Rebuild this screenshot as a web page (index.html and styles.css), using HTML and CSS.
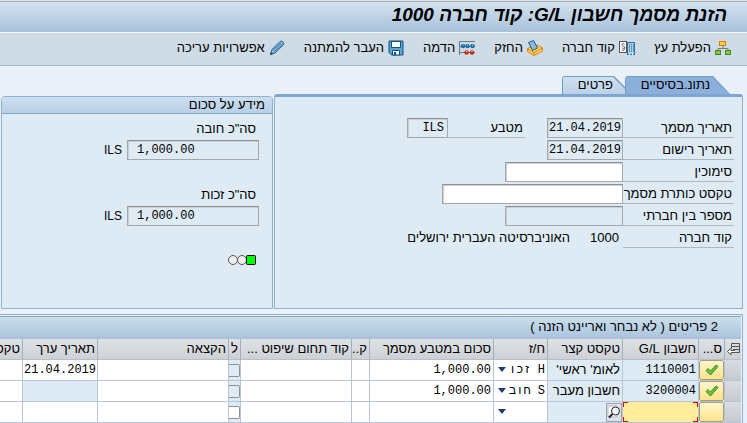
FILE: index.html
```html
<!DOCTYPE html>
<html lang="he" dir="rtl">
<head>
  <meta charset="UTF-8" />
  <meta name="viewport" content="width=device-width, initial-scale=1.0" />
  <title>הזנת מסמך חשבון G/L</title>
  <link rel="stylesheet" href="styles.css">
</head>
<body>
  <div class="page">
    <header class="title-bar">
      <h1>הזנת מסמך חשבון G/L: קוד חברה 1000</h1>
    </header>

    <nav class="toolbar">
      <button type="button">
        <svg width="16" height="16" viewBox="0 0 16 16"><path d="M8 5v4M3 11V8.500h10V11" fill="none" stroke="#777" /><rect x="4.500" y="1.500" width="6" height="4" fill="#ffd23c" stroke="#e8760f" /><rect x=".5" y="10.500" width="5" height="4" fill="#8cc63a" stroke="#3d8c1e" /><rect x="10.500" y="10.500" width="5" height="4" fill="#8cc63a" stroke="#3d8c1e" /></svg>
        הפעלת עץ
      </button>
      <button type="button">
        <svg width="16" height="16" viewBox="0 0 16 16"><rect x="8.500" y="2.500" width="7" height="12" fill="#a9cbe4" stroke="#2a6f9f" /><path d="M10 5h5M10 7h5M10 9h5M10 11h5" stroke="#2a6f9f" stroke-dasharray="1 1" /><path d="M10.500 15v-2M13.500 15v-2" stroke="#e8f2fa" /><rect x=".5" y="1.500" width="7" height="11" fill="#fff" stroke="#555" /><path d="M5.500 4.500C5 3 2.500 3.500 3 5s2.500 1 2.500 2.500S3 8.500 3 7.500M5 6.500c1.500 1 .5 2.500 0 3.500s-2 .5-2-.5" fill="none" stroke="#444" stroke-width=".8" /></svg>
        קוד חברה
      </button>
      <button type="button">
        <svg width="16" height="16" viewBox="0 0 16 16"><path d="M.5 8.500L10 5l5.500 3v3L7 15.500l-6.500-4z" fill="#ffd65a" stroke="#e57c17" /><path d="M.5 9l6.500 3.500L15.500 8M7 12.500v3" fill="none" stroke="#e57c17" /><path d="M1.500 2.500L6.500.5l4 7.500-5 2.500z" fill="#8db9dc" stroke="#1d5e8d" /></svg>
        החזק
      </button>
      <button type="button">
        <svg width="16" height="16" viewBox="0 0 16 16"><path d="M.5 15V1.500H16M1 6.500h15M1 12.500h15" fill="none" stroke="#777" /><g fill="#1270a8"><circle cx="4" cy="6" r="2.200" /><circle cx="8.500" cy="6" r="2.200" /><circle cx="13.500" cy="6" r="2.200" /></g><g fill="#c22a16"><circle cx="7.500" cy="12.500" r="2.200" /><circle cx="13" cy="12.500" r="2.200" /></g><path d="M3.500 5h1M8 5h1M13 5h1M7 11.500h1M12.500 11.500h1" stroke="#fff" /></svg>
        הדמה
      </button>
      <button type="button">
        <svg width="16" height="16" viewBox="0 0 16 16"><path d="M1 1h14v14H3.500L1 12.500z" fill="#5fa3cf" stroke="#0d5486" /><path d="M3.500 1.500h9v6h-9zM4.500 10.500h7V15h-7z" fill="#fff" stroke="#0d5486" /><path d="M6 12h2v3H6z" fill="#0d5486" /></svg>
        העבר להמתנה
      </button>
      <button type="button">
        <svg width="16" height="16" viewBox="0 0 16 16"><path d="M1.500 14.500l1.500-5L11 1.500q1.500-1 3 .3t.5 3L6 13z" fill="#86b6d9" stroke="#2a6590" /><path d="M4 10l8-7M5.500 11.500l8-7" stroke="#3c7aa6" /><path d="M1 15l1-3 2 2z" fill="#1f3f58" /></svg>
        אפשרויות עריכה
      </button>
    </nav>

    <main>
      <div class="top">
        <section class="document">
          <div class="tabs">
            <button type="button" class="tab tab-active"><span>נתונ.בסיסיים</span></button>
            <button type="button" class="tab"><span>פרטים</span></button>
          </div>
          <div class="tab-body">
            <div class="field">
              <label for="docDate">תאריך מסמך</label>
              <input class="w-date" type="text" id="docDate" value="21.04.2019" readonly />
              <label class="second" for="currency">מטבע</label>
              <input class="w-cur" type="text" id="currency" value="ILS" readonly />
            </div>
            <div class="field">
              <label for="postDate">תאריך רישום</label>
              <input class="w-date" type="text" id="postDate" value="21.04.2019" readonly />
            </div>
            <div class="field">
              <label for="reference">סימוכין</label>
              <input class="w-ref" type="text" id="reference" />
            </div>
            <div class="field">
              <label for="headerText">טקסט כותרת מסמך</label>
              <input class="w-text" type="text" id="headerText" />
            </div>
            <div class="field">
              <label for="crossNo">מספר בין חברתי</label>
              <input class="w-ref" type="text" id="crossNo" readonly />
            </div>
            <div class="field">
              <span class="caption">קוד חברה</span>
              <span class="code">1000</span>
              <span>האוניברסיטה העברית ירושלים</span>
            </div>
          </div>
        </section>

        <section class="amounts">
          <h2>מידע על סכום</h2>
          <div class="amounts-body">
            <label for="debit">סה"כ חובה</label>
            <div class="amount">
              <input type="text" id="debit" value="1,000.00" readonly />
              <span>ILS</span>
            </div>
            <label for="credit">סה"כ זכות</label>
            <div class="amount">
              <input type="text" id="credit" value="1,000.00" readonly />
              <span>ILS</span>
            </div>
            <svg class="lights" width="28" height="12" viewBox="0 0 28 12"><circle cx="5" cy="6" r="4.500" fill="#eee" stroke="#555" /><circle cx="14" cy="6" r="4.500" fill="#eee" stroke="#555" /><rect x="18.500" y="1.500" width="9" height="9" rx="1" fill="#0f0" stroke="#000" /></svg>
          </div>
        </section>
      </div>

      <section class="items">
        <h2>2 פריטים ( לא נבחר ואריינט הזנה )</h2>
        <table>
          <colgroup>
            <col class="c-sel"><col class="c-status"><col class="c-gl"><col class="c-short"><col class="c-dc"><col class="c-amount"><col class="c-k"><col class="c-jur"><col class="c-l"><col class="c-assign"><col class="c-date"><col>
          </colgroup>
          <thead>
            <tr>
              <th class="config"><svg width="13" height="13" viewBox="0 0 13 13"><path d="M4.500 5V.5h8v9H8M4.500 3.500h8M6 6.500h6.500" fill="none" stroke="#555" /><path d="M8 7.500H4V5L.5 8.500 4 12V9.500h4" fill="#fff" stroke="#555" /></svg></th>
              <th>ס...</th>
              <th>חשבון G/L</th>
              <th>טקסט קצר</th>
              <th>ח/ז</th>
              <th>סכום במטבע מסמך</th>
              <th>ק..</th>
              <th>קוד תחום שיפוט ...</th>
              <th>ל</th>
              <th>הקצאה</th>
              <th>תאריך ערך</th>
              <th>טקסט</th>
            </tr>
          </thead>
          <tbody>
            <tr>
              <td class="sel"></td>
              <td class="status"><button type="button" aria-label="תקין"><svg width="14" height="12" viewBox="0 0 14 12"><path d="M1 6.500l2-2L5.500 7 11 1l2 1.500L5.500 11z" fill="#6cc03c" stroke="#3b8f1f" /></svg></button></td>
              <td class="ro num">1110001</td>
              <td class="ro">לאומ' ראשי'</td>
              <td class="dc"><select aria-label="ח/ז"><option>H זכו</option><option>S חוב</option></select></td>
              <td><input type="text" aria-label="סכום" value="1,000.00" /></td>
              <td></td>
              <td></td>
              <td class="ro check"><input type="checkbox" aria-label="ל" disabled /></td>
              <td></td>
              <td class="date"><input type="text" aria-label="תאריך ערך" value="21.04.2019" /></td>
              <td></td>
            </tr>
            <tr>
              <td class="sel"></td>
              <td class="status"><button type="button" aria-label="תקין"><svg width="14" height="12" viewBox="0 0 14 12"><path d="M1 6.500l2-2L5.500 7 11 1l2 1.500L5.500 11z" fill="#6cc03c" stroke="#3b8f1f" /></svg></button></td>
              <td class="ro num">3200004</td>
              <td class="ro">חשבון מעבר</td>
              <td class="dc"><select aria-label="ח/ז"><option>S חוב</option><option>H זכו</option></select></td>
              <td><input type="text" aria-label="סכום" value="1,000.00" /></td>
              <td></td>
              <td></td>
              <td class="ro check"><input type="checkbox" aria-label="ל" disabled /></td>
              <td></td>
              <td class="ro"></td>
              <td></td>
            </tr>
            <tr>
              <td class="sel"></td>
              <td class="status"><button type="button" aria-label="ריק"></button></td>
              <td class="current"><input type="text" aria-label="חשבון G/L" /></td>
              <td class="ro help"><button type="button" aria-label="חיפוש"><svg width="14" height="14" viewBox="0 0 14 14"><path d="M1 1h9v11H1z" fill="#fff" stroke="#b5bcc4" /><circle cx="8.500" cy="6" r="4" fill="#f4f8fc" stroke="#222" /><path d="M5.500 9L2 12.500" stroke="#222" stroke-width="2" /></svg></button></td>
              <td class="dc"><select aria-label="ח/ז"><option></option><option>S חוב</option><option>H זכו</option></select></td>
              <td><input type="text" aria-label="סכום" /></td>
              <td></td>
              <td></td>
              <td class="ro check"><input type="checkbox" aria-label="ל" /></td>
              <td></td>
              <td></td>
              <td></td>
            </tr>
          </tbody>
        </table>
      </section>
    </main>
  </div>
</body>
</html>
```
FILE: styles.css
```css
* {
  box-sizing: border-box;
}
body {
  margin: 0;
  font-family: "Liberation Sans", Arial, sans-serif;
  font-size: 13px;
  line-height: 16px;
  color: #000;
  background-color: #e9f0f7;
}
button, input, select {
  font: inherit;
  color: inherit;
  margin: 0;
  border-radius: 0;
}
h1, h2 {
  margin: 0;
}
.page {
  border-top: 1px solid #dde6ee;
  overflow: hidden;
}

/* title and toolbar */
.title-bar {
  height: 32px;
  padding: 0 20px;
  border-top: 1px solid #a3adb8;
  border-bottom: 1px solid #f4f8fb;
  background: linear-gradient(#d3e2ee, #a9c1da);
}
.title-bar h1 {
  font-size: 19px;
  line-height: 26px;
  font-style: italic;
  white-space: nowrap;
}
.toolbar {
  display: flex;
  gap: 19px;
  height: 33px;
  padding: 0 16px 2px;
  border-bottom: 1px solid #a2b5c6;
  background-color: #cfdce6;
}
.toolbar button {
  display: flex;
  align-items: center;
  gap: 4px;
  padding: 0;
  border: none;
  background: none;
  white-space: nowrap;
}

/* header panels */
main {
  padding: 10px 4px 0 0;
}
.top {
  display: flex;
  align-items: flex-end;
  gap: 1px;
  padding-left: 1px;
}
.document {
  flex: 1;
}
.tabs {
  display: flex;
  padding-right: 13px;
}
.tab {
  position: relative;
  height: 18px;
  border: none;
  background-color: #6f9cc8;
  text-align: right;
}
.tab::before {
  content: "";
  position: absolute;
}
.tab span {
  position: relative;
}
.tab-active {
  width: 105px;
  padding: 0 20px 0 0;
  clip-path: polygon(0 2px, 2px 0, calc(100% - 17px) 0, 100% 100%, 0 100%);
}
.tab-active::before {
  inset: 1px 1px 0 1px;
  background: #8db0da;
  clip-path: polygon(0 1px, 1px 0, calc(100% - 17px) 0, 100% 100%, 0 100%);
}
.tab:not(.tab-active) {
  width: 63px;
  padding: 0 12px 0 0;
  clip-path: polygon(0 2px, 2px 0, calc(100% - 11px) 0, 100% 11px, 100% 100%, 0 100%);
}
.tab:not(.tab-active)::before {
  inset: 1px 0 0 1px;
  background: linear-gradient(#cfe0ef, #bcd2e8);
  clip-path: polygon(0 1px, 1px 0, calc(100% - 12px) 0, 100% 12px, 100% 100%, 0 100%);
}
.tab-body {
  height: 215px;
  padding: 21px 8px 0 0;
  border: 1px solid #8fb0d0;
  border-top: 3px solid #7fa6d2;
  border-radius: 3px 3px 0 0;
  background-color: #deebf5;
}
.field {
  display: flex;
  height: 20px;
  margin-bottom: 2px;
  line-height: 20px;
  white-space: nowrap;
}
.field label, .caption {
  width: 111px;
  padding-right: 2px;
  border-bottom: 1px solid #aeb6be;
}
.field .second {
  width: 77px;
  margin-right: 22px;
}
.code {
  width: 53px;
  padding-right: 4px;
}
.field input, .amount input {
  height: 20px;
  padding: 0 3px;
  border: 1px solid #a6a9ac;
  border-top-color: #8e9194;
  background-color: #fff;
  box-shadow: inset 1px 1px 1px #c9ced3;
  font-family: "Liberation Mono", monospace;
  font-size: 12px;
}
.field input:read-only, .amount input {
  background-color: #deebf5;
}
.field .w-date {
  width: 76px;
  padding: 0 1px;
}
.w-cur {
  width: 41px;
}
.w-ref {
  width: 118px;
}
.w-text {
  width: 181px;
}

.amounts {
  width: 272px;
  border: 1px solid #8fb0d0;
  border-radius: 4px 4px 0 0;
  background-color: #deebf5;
}
.amounts h2 {
  height: 17px;
  padding: 0 7px;
  border-bottom: 1px solid #7fa6cc;
  border-radius: 3px 3px 0 0;
  background: linear-gradient(#cbdfef, #b9cfe6);
  font-size: 13px;
  font-weight: normal;
  line-height: 16px;
}
.amounts-body {
  display: flex;
  flex-direction: column;
  align-items: flex-start;
  height: 194px;
  padding: 4px 13px 0;
}
.amounts-body label {
  padding-right: 3px;
  line-height: 22px;
}
.amount {
  display: flex;
  align-items: center;
  gap: 5px;
  margin-bottom: 24px;
  font-size: 12px;
}
.amount input {
  width: 132px;
  padding: 0 9px;
  direction: ltr;
}
.lights {
  margin: 4px 3px 0 0;
}

/* line items */
.items {
  margin-top: 5px;
  padding: 1px 1px 0 0;
  border-top: 1px solid #8fb0d0;
  border-right: 1px solid #8fb0d0;
}
.items h2 {
  height: 23px;
  padding: 0 23px;
  border-top: 1px solid #8fa9c2;
  background: linear-gradient(#cbdfec, #a9c2dc);
  font-size: 13px;
  font-weight: normal;
  line-height: 20px;
}
table {
  width: 100%;
  table-layout: fixed;
  border-collapse: separate;
  border-spacing: 0;
  white-space: nowrap;
}
.c-sel { width: 17px; }
.c-status { width: 26px; }
.c-gl { width: 76px; }
.c-short { width: 75px; }
.c-dc { width: 54px; }
.c-amount { width: 124px; }
.c-k { width: 18px; }
.c-jur { width: 111px; }
.c-l { width: 12px; }
.c-assign { width: 131px; }
.c-date { width: 75px; }
th {
  height: 21px;
  padding: 0 2px;
  border-left: 1px solid #a5afb9;
  border-bottom: 1px solid #b4bfca;
  background: linear-gradient(#dfe2e5, #cdd1d6);
  font-weight: normal;
  text-align: right;
}
.config {
  padding: 0;
}
.config svg, .status svg, .help svg {
  display: block;
  margin: auto;
}
td {
  height: 21px;
  padding: 0 2px;
  border-left: 1px solid #b9c5d3;
  border-bottom: 1px solid #b9c5d3;
  background-color: #fff;
}
th:last-child, td:last-child {
  border-left: none;
}
td input[type="text"] {
  display: block;
  width: 100%;
  height: 20px;
  padding: 0;
  border: none;
  background: none;
  font-family: "Liberation Mono", monospace;
  font-size: 12px;
}
.date {
  padding: 0 1px;
}
.ro {
  background-color: #deebf5;
}
.num {
  font-family: "Liberation Mono", monospace;
  font-size: 12px;
}
.sel {
  background: linear-gradient(#d9dde2, #c5cad1);
}
.status {
  padding: 0;
}
.status button {
  display: block;
  width: 25px;
  height: 20px;
  padding: 0;
  border: 1px solid #a39c80;
  border-radius: 2px;
  background: linear-gradient(#fff6cd, #fde28a);
}
.dc {
  position: relative;
  padding: 0;
}
.dc::after {
  content: "";
  position: absolute;
  left: 4px;
  top: 7px;
  border: 4px solid transparent;
  border-top: 5px solid #1f3d75;
  border-bottom: none;
  pointer-events: none;
}
.dc select {
  display: block;
  width: 100%;
  height: 20px;
  padding: 0 2px;
  border: none;
  appearance: none;
  background: none;
  font-family: "Liberation Mono", monospace;
  font-size: 12px;
}
.check {
  padding: 0;
}
.check input {
  display: block;
  width: 11px;
  height: 13px;
  appearance: none;
  border: 1px solid #8e9194;
  border-left: none;
  border-radius: 0 2px 2px 0;
  background-color: #fff;
}
.check input:disabled {
  background-color: #deebf5;
}
.current {
  padding: 0;
  background:
    linear-gradient(#e00, #e00) 0 0 / 5px 1px,
    linear-gradient(#e00, #e00) 0 0 / 1px 5px,
    linear-gradient(#e00, #e00) 100% 0 / 5px 1px,
    linear-gradient(#e00, #e00) 100% 0 / 1px 5px,
    linear-gradient(#e00, #e00) 0 100% / 5px 1px,
    linear-gradient(#e00, #e00) 0 100% / 1px 5px,
    linear-gradient(#e00, #e00) 100% 100% / 5px 1px,
    linear-gradient(#e00, #e00) 100% 100% / 1px 5px,
    #ffed9e;
  background-repeat: no-repeat;
}
.help {
  padding: 0;
}
.help button {
  display: block;
  width: 16px;
  height: 19px;
  padding: 0;
  border: 1px solid #9ba6b2;
  background-color: #dde2e8;
}
```
